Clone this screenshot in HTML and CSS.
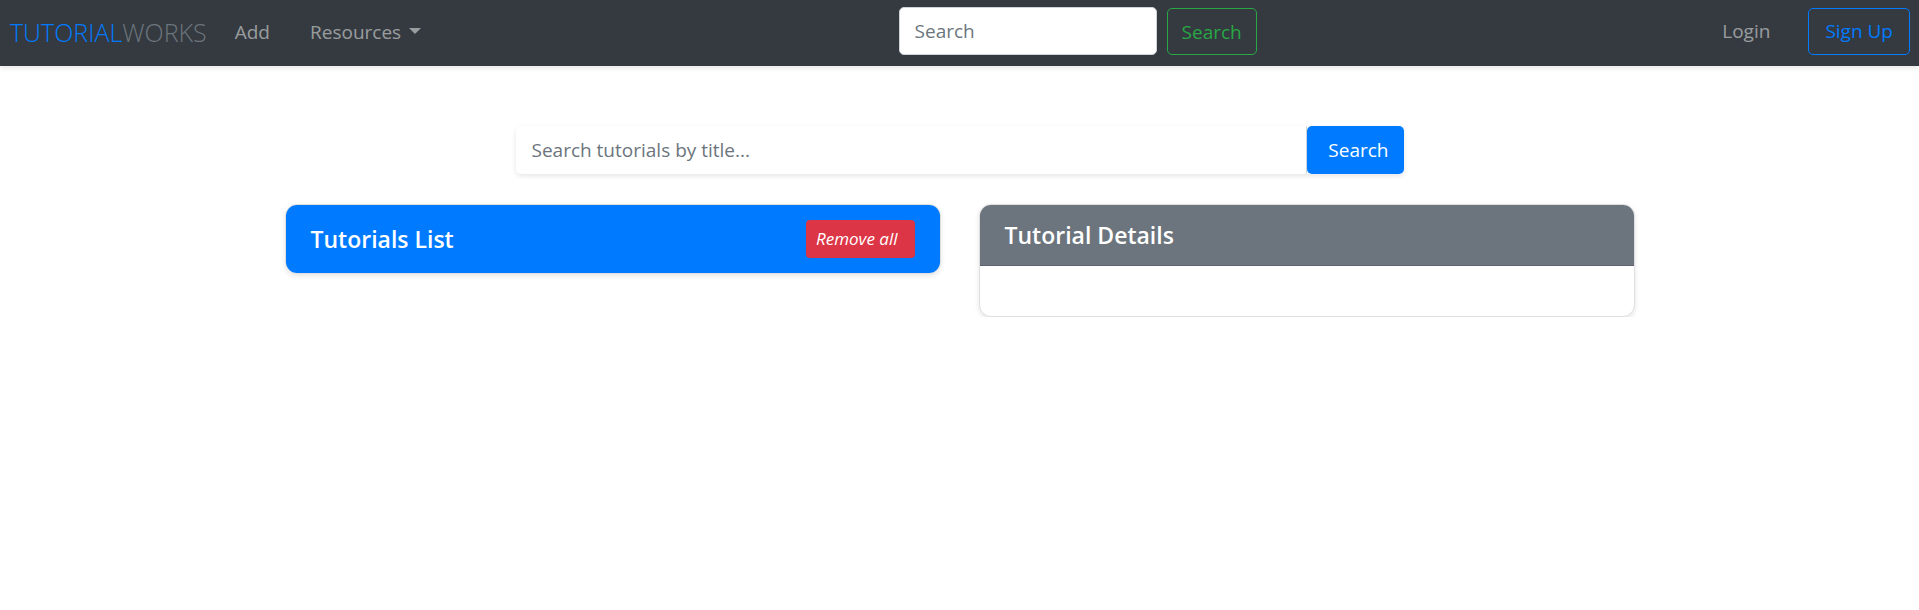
FILE: index.html
```html
<!DOCTYPE html>
<html lang="en">
<head>
<meta charset="utf-8">
<title>TutorialWorks</title>
<link rel="stylesheet" href="styles.css">
</head>
<body>
<nav class="navbar">
  <div class="nav-group nav-main">
    <a class="brand" href="#"><span class="brand-primary">TUTORIAL</span><span class="brand-muted">WORKS</span></a>
    <a class="nav-link" href="#">Add</a>
    <a class="nav-link dropdown" href="#">Resources</a>
  </div>
  <form class="nav-search">
    <input class="input nav-input" type="search" placeholder="Search" aria-label="Search">
    <button class="btn btn-success" type="submit">Search</button>
  </form>
  <div class="nav-group nav-account">
    <a class="nav-link" href="#">Login</a>
    <a class="btn btn-signup" href="#">Sign Up</a>
  </div>
</nav>
<main class="container">
  <form class="title-search">
    <input class="input title-input" type="text" placeholder="Search tutorials by title..." aria-label="Search tutorials by title">
    <button class="btn btn-primary" type="button">Search</button>
  </form>
  <div class="cards">
    <section class="card">
      <header class="card-header header-primary">
        <h2 class="card-title">Tutorials List</h2>
        <button class="btn-remove" type="button">Remove all</button>
      </header>
    </section>
    <section class="card">
      <header class="card-header header-secondary">
        <h2 class="card-title">Tutorial Details</h2>
      </header>
      <div class="card-body"></div>
    </section>
  </div>
</main>
</body>
</html>
```
FILE: styles.css
```css
* { box-sizing: border-box; }
body {
  margin: 0;
  background: #fff;
  color: #212529;
  font: 19px/30px "Open Sans", "Noto Sans", sans-serif;
}
a { text-decoration: none; }
.navbar {
  display: flex;
  align-items: center;
  justify-content: space-between;
  min-height: 66px;
  padding: 0 9px 4px 10px;
  background: #343a40;
  box-shadow: 0 2px 5px rgba(0, 0, 0, .1);
}
.nav-group { display: flex; align-items: center; }
.nav-main { padding-top: 2px; }
.brand { margin-right: 18px; font-size: 25px; font-weight: 300; }
.brand-primary { color: #007bff; }
.brand-muted { color: #6c757d; }
.nav-link { padding: 10px; margin-right: 20px; color: rgba(255, 255, 255, .5); }
.dropdown { margin-right: 12px; }
.dropdown::after {
  content: "";
  display: inline-block;
  margin-left: 8px;
  vertical-align: 5px;
  border-top: 6px solid;
  border-left: 6px solid transparent;
  border-right: 6px solid transparent;
}
.nav-search { display: flex; align-items: flex-end; gap: 10px; }
.input {
  min-width: 0;
  height: 48px;
  padding: 8px 15px;
  border: 1px solid #ced4da;
  border-radius: 5px;
  background: #fff;
  color: #495057;
  font: inherit;
}
.input::placeholder { color: #6c757d; opacity: 1; }
.nav-input { width: 258px; }
.btn {
  padding: 8px 15px;
  border: 1px solid transparent;
  border-radius: 5px;
  background: none;
  font: inherit;
}
.btn-success { padding: 7px 14px; border-color: #28a745; color: #28a745; height: 47px; }
.nav-account .nav-link { margin-right: 28px; }
.btn-signup { padding: 7px 16px; border-color: #007bff; color: #007bff; height: 47px; }
.container { max-width: 1350px; margin: 60px auto 0; }
.title-search {
  display: flex;
  max-width: 888px;
  margin: 0 auto 30px;
  border-radius: 5px;
  box-shadow: 0 2px 5px rgba(0, 0, 0, .1);
}
.title-input { flex: 1; border-color: transparent; border-right: 1px solid #ced4da; border-radius: 5px 0 0 5px; }
.btn-primary { padding: 8px 14px 8px 20px; background: #007bff; color: #fff; }
.cards { display: grid; grid-template-columns: 1fr 1fr; gap: 38px; align-items: start; }
.card {
  overflow: hidden;
  border: 1px solid #dfdfdf;
  border-radius: 12px;
  background: #fff;
  box-shadow: 0 2px 5px rgba(0, 0, 0, .1);
}
.card-header {
  display: flex;
  align-items: center;
  justify-content: space-between;
  padding: 15px 25px;
  color: #fff;
}
.header-primary { background: #007bff; }
.header-secondary { background: #6c757d; border-bottom: 1px solid #5e636f; }
.card-title { margin: 0; font-size: 23px; line-height: 30px; font-weight: 600; }
.btn-remove {
  height: 38px;
  padding: 0 17px 0 10px;
  border: 0;
  border-radius: 4px;
  background: #dc3545;
  color: #fff;
  font: italic 17px/26px "Open Sans", "Noto Sans", sans-serif;
}
.card-body { min-height: 50px; }
```
